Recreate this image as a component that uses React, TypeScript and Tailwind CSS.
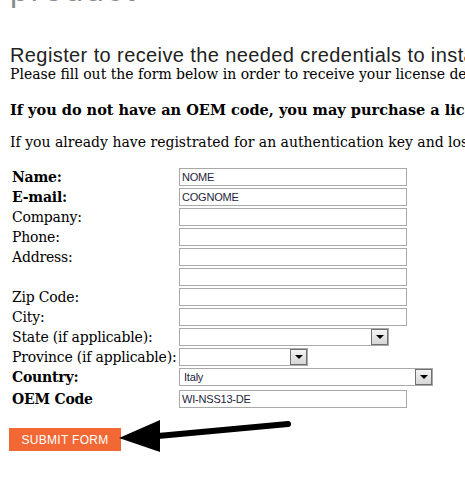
import React from 'react';

const serif = { fontFamily: '"DejaVu Serif", "Liberation Serif", serif' };

const TextField = ({ value = '' }: { value?: string }) => (
    <div className="h-[18px] w-[228px] border border-[#a9a9a9] bg-white px-[2px] text-[11px] leading-[16px] text-[#1e1e3c] font-['Liberation_Sans',sans-serif]">
        {value}
    </div>
);

const SelectField = ({ width, value = '' }: { width: string; value?: string }) => (
    <div className={`flex h-[18px] ${width} items-stretch border border-[#a9a9a9] bg-white`}>
        <div className="flex-1 px-[4px] text-[11px] leading-[16px] text-[#1e1e3c] font-['Liberation_Sans',sans-serif]">{value}</div>
        <div className="flex w-[17px] items-center justify-center border border-[#707070] bg-gradient-to-b from-[#f4f4f4] to-[#d6d6d6]">
            <div className="h-0 w-0 border-x-[4px] border-t-[4px] border-x-transparent border-t-black"></div>
        </div>
    </div>
);

const FIELDS: { label: string; bold?: boolean; field: React.ReactNode }[] = [
    { label: 'Name:', bold: true, field: <TextField value="NOME" /> },
    { label: 'E-mail:', bold: true, field: <TextField value="COGNOME" /> },
    { label: 'Company:', field: <TextField /> },
    { label: 'Phone:', field: <TextField /> },
    { label: 'Address:', field: <TextField /> },
    { label: '', field: <TextField /> },
    { label: 'Zip Code:', field: <TextField /> },
    { label: 'City:', field: <TextField /> },
    { label: 'State (if applicable):', field: <SelectField width="w-[210px]" /> },
    { label: 'Province (if applicable):', field: <SelectField width="w-[129px]" /> },
    { label: 'Country:', bold: true, field: <SelectField width="w-[254px]" value="Italy" /> },
];

export default function App() {
    return (
        <div className="relative h-[485px] w-[465px] overflow-hidden bg-white text-black">
            {/* page title, only its bottom edge shows */}
            <div className="mt-[-26px] h-[32px] pl-[10px] text-[32px] leading-[32px] tracking-[3px] text-[#8a8a8a] font-['Liberation_Sans',sans-serif] whitespace-nowrap">
                product
            </div>

            <div className="whitespace-nowrap pl-[10px] pt-[38px]">
                <div className="text-[20px] leading-[22px] tracking-[0.4px] text-[#222] font-['Liberation_Sans',sans-serif]">
                    Register to receive the needed credentials to install
                </div>
                <div style={serif} className="text-[14px] leading-[16px]">
                    Please fill out the form below in order to receive your license details
                </div>
                <div style={serif} className="mt-[20px] text-[14.5px] font-bold leading-[16px]">
                    If you do not have an OEM code, you may purchase a license
                </div>
                <div style={serif} className="mt-[16px] text-[14px] leading-[16px]">
                    If you already have registrated for an authentication key and lost it
                </div>
            </div>

            <table style={serif} className="ml-[10px] mt-[16px] border-separate border-spacing-[2px] text-[14px] tracking-[-0.2px]">
                <tbody>
                    {FIELDS.map((f, i) => (
                        <tr key={i}>
                            <td className={`h-[18px] w-[165px] p-0 align-middle leading-[18px] whitespace-nowrap ${f.bold ? 'font-bold' : ''}`}>{f.label}</td>
                            <td className="p-0 align-middle">{f.field}</td>
                        </tr>
                    ))}
                    <tr>
                        <td className="h-[22px] p-0 align-middle font-bold leading-[18px]">OEM Code</td>
                        <td className="p-0 align-middle"><TextField value="WI-NSS13-DE" /></td>
                    </tr>
                </tbody>
            </table>

            <div className="ml-[9px] mt-[16px] flex h-[23px] w-[112px] items-center justify-center bg-[#f26835] text-[12px] tracking-[0.3px] text-white font-['Liberation_Sans',sans-serif]">
                SUBMIT FORM
            </div>

            {/* annotation arrow */}
            <svg className="absolute left-0 top-0" width="465" height="485">
                <line x1="158" y1="436" x2="288" y2="424" stroke="black" strokeWidth="6" strokeLinecap="round" />
                <polygon points="119,438 160,420 160,452" fill="black" />
            </svg>
        </div>
    );
}
